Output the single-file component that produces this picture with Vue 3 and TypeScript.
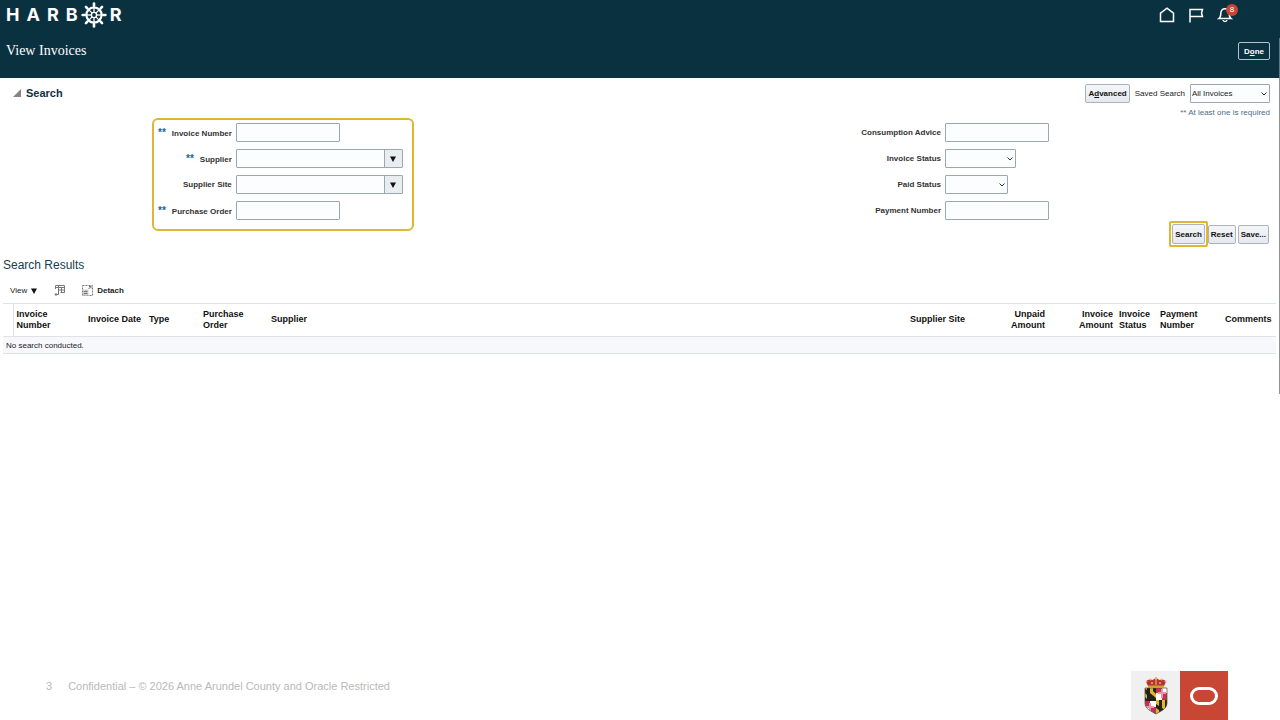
<script setup lang="ts">
import { ref } from 'vue'

interface Field {
  id: string
  label: string
  kind: 'text' | 'combo' | 'select'
  required?: boolean
  size?: string
}

interface Column {
  label: string[]
  width: string
  align?: 'right'
}

const mainFields: Field[] = [
  { id: 'invoice-number', label: 'Invoice Number', kind: 'text', required: true },
  { id: 'supplier', label: 'Supplier', kind: 'combo', required: true },
  { id: 'supplier-site', label: 'Supplier Site', kind: 'combo' },
  { id: 'purchase-order', label: 'Purchase Order', kind: 'text', required: true },
]

const extraFields: Field[] = [
  { id: 'consumption-advice', label: 'Consumption Advice', kind: 'text' },
  { id: 'invoice-status', label: 'Invoice Status', kind: 'select', size: 'wide' },
  { id: 'paid-status', label: 'Paid Status', kind: 'select', size: 'narrow' },
  { id: 'payment-number', label: 'Payment Number', kind: 'text' },
]

const columns: Column[] = [
  { label: ['Invoice', 'Number'], width: 'w72' },
  { label: ['Invoice Date'], width: 'w61' },
  { label: ['Type'], width: 'w54' },
  { label: ['Purchase', 'Order'], width: 'w68' },
  { label: ['Supplier'], width: 'fluid' },
  { label: ['Supplier Site'], width: 'w80' },
  { label: ['Unpaid', 'Amount'], width: 'w61', align: 'right' },
  { label: ['Invoice', 'Amount'], width: 'w68', align: 'right' },
  { label: ['Invoice', 'Status'], width: 'w41' },
  { label: ['Payment', 'Number'], width: 'w65' },
  { label: ['Comments'], width: 'w54' },
]

const spokes = [0, 45, 90, 135, 180, 225, 270, 315]
const savedSearch = ref('All Invoices')
const expanded = ref(true)
</script>

<template>
  <div class="page">
    <div class="screen">
      <header class="top">
        <div class="brand-row">
          <div class="brand">
            <span>H</span><span>A</span><span>R</span><span>B</span>
            <svg class="wheel" viewBox="0 0 26 26" role="img" aria-label="O">
              <g fill="none" stroke="#fff">
                <circle cx="13" cy="13" r="7.6" stroke-width="2.2" />
                <circle cx="13" cy="13" r="2.6" stroke-width="1.4" />
                <g v-for="a in spokes" :key="a" :transform="`rotate(${a} 13 13)`">
                  <path d="M13 10.4V2" stroke-width="1.3" />
                  <path d="M13 3.4V1.6" stroke-width="2.6" stroke-linecap="round" />
                </g>
              </g>
            </svg>
            <span>R</span>
          </div>
          <nav class="icons">
            <a href="#" aria-label="Home">
              <svg viewBox="0 0 16 16"><path d="M1.500 14.500V6.200L8 1.200l6.500 5v8.300z" /></svg>
            </a>
            <a href="#" aria-label="Watchlist">
              <svg viewBox="0 0 16 16"><path d="M2 15.500V2.500h12.500l-1 3.500 1 3.500H2" /></svg>
            </a>
            <a href="#" class="bell" aria-label="Notifications">
              <svg viewBox="0 0 16 16">
                <path d="M2 11.500c1.500-1 1.800-2 1.800-5C3.800 3.500 5.500 1.800 8 1.800s4.200 1.700 4.200 4.700c0 3 .3 4 1.800 5zM6 13c.3 2 3.700 2 4 0" />
              </svg>
              <span class="badge">8</span>
            </a>
          </nav>
        </div>
        <div class="title-row">
          <h1>View Invoices</h1>
          <button type="button" class="done">D<u>o</u>ne</button>
        </div>
      </header>

      <form class="search" @submit.prevent>
        <div class="search-head">
          <button type="button" class="disclose" :aria-expanded="expanded" @click="expanded = !expanded">
            <svg viewBox="0 0 8 8"><path d="M8 0v8H0z" /></svg>
            <span>Search</span>
          </button>
          <div class="saved">
            <button type="button" class="btn">A<u>d</u>vanced</button>
            <label for="saved-search">Saved Search</label>
            <span class="select all">
              <select id="saved-search" v-model="savedSearch">
                <option>All Invoices</option>
              </select>
              <svg viewBox="0 0 6 4"><path d="M.5.5 3 3 5.500.5" /></svg>
            </span>
          </div>
        </div>
        <p class="hint">** At least one is required</p>

        <div class="fields">
          <div class="group boxed">
            <template v-for="f in mainFields" :key="f.id">
              <label :for="f.id"><span v-if="f.required" class="star">**</span>{{ f.label }}</label>
              <input v-if="f.kind === 'text'" :id="f.id" type="text" class="text" />
              <span v-else class="combo">
                <input :id="f.id" type="text" />
                <button type="button" :aria-label="`Open ${f.label}`">
                  <svg viewBox="0 0 6 6"><path d="M0 .5h6l-3 5.500z" /></svg>
                </button>
              </span>
            </template>
          </div>
          <div class="group">
            <template v-for="f in extraFields" :key="f.id">
              <label :for="f.id">{{ f.label }}</label>
              <input v-if="f.kind === 'text'" :id="f.id" type="text" class="text" />
              <span v-else class="select" :class="f.size">
                <select :id="f.id"><option></option></select>
                <svg viewBox="0 0 6 4"><path d="M.5.5 3 3 5.500.5" /></svg>
              </span>
            </template>
          </div>
        </div>

        <div class="actions">
          <span class="highlight"><button type="submit" class="btn">Search</button></span>
          <button type="reset" class="btn">Reset</button>
          <button type="button" class="btn save">Save...</button>
        </div>
      </form>

      <section class="results">
        <h2>Search Results</h2>
        <div class="toolbar">
          <button type="button" class="tool">
            View <svg class="caret" viewBox="0 0 6 6"><path d="M0 .5h6l-3 5.500z" /></svg>
          </button>
          <button type="button" class="tool" aria-label="Query by example">
            <svg class="glyph" viewBox="0 0 11 11">
              <path d="M1.500.5h9v7h-4M1.500.5V4M1.500 2.500h9M4.500 1v4M7.500 2.500v5M4.500 5h6M4.500 5v4.500H1M2.500 8 1 9.500 2.500 11" />
            </svg>
          </button>
          <button type="button" class="tool strong">
            <svg class="glyph" viewBox="0 0 11 11">
              <path d="M.5.5h10v10H.5z" stroke-dasharray="2 1" />
              <path d="M1 4.500h5.500v6H1z" class="pane" />
              <path d="M2 6.500h3.500M2 8.500h3.500M6.500 4 9 1.500M7 1.500h2v2" />
            </svg>
            Detach
          </button>
        </div>
        <table>
          <colgroup>
            <col class="w10" />
            <col v-for="c in columns" :key="c.label.join()" :class="c.width" />
          </colgroup>
          <thead>
            <tr>
              <td class="corner"></td>
              <th v-for="c in columns" :key="c.label.join()" scope="col" :class="c.align">
                <template v-for="(line, i) in c.label" :key="line"><br v-if="i" />{{ line }}</template>
              </th>
            </tr>
          </thead>
          <tbody>
            <tr><td colspan="12">No search conducted.</td></tr>
          </tbody>
        </table>
      </section>
    </div>

    <footer>
      <p><span>3</span><span>Confidential – © 2026 Anne Arundel County and Oracle Restricted</span></p>
      <div class="logos">
        <div class="county">
          <svg viewBox="0 0 24 38" role="img" aria-label="County crest">
            <defs>
              <clipPath id="shield"><path d="M1 11h22v15c0 6-6 8-11 11C7 34 1 32 1 26z" /></clipPath>
            </defs>
            <path d="M4 9 2 5c1-3 5-3 7-2 1-2 5-2 6 0 2-1 6-1 7 2l-2 4z" fill="#b5323c" />
            <path d="M4 8.500h16v2H4zM11.300 0h1.400v8h-1.400z" fill="#d6a32f" />
            <g fill="#e3b75d">
              <circle cx="12" cy="1.500" r="1.300" /><circle cx="6.500" cy="2.500" r="1" />
              <circle cx="17.500" cy="2.500" r="1" /><circle cx="2.500" cy="4.500" r="1" /><circle cx="21.500" cy="4.500" r="1" />
              <circle cx="8" cy="6" r="1" /><circle cx="16" cy="6" r="1" />
            </g>
            <g clip-path="url(#shield)">
              <path d="M0 10h24v28H0z" fill="#e2b52f" />
              <path d="M3 10h3v6l6 5v-4l-3-3v-4h3v28H9v-6l-9-8v-5l3 3v-4l-3-3v-4l3 2zM15 23h3v15h-3zM21 23h3v12h-3zM12 27l12 8v4l-12-8z" fill="#24201d" />
              <path d="M12 10h12v13H12zM0 24h12v14H0z" fill="#fff" />
              <path d="M12 10h6v6h-6zM18 16h6v7h-6zM0 24h6v6H0zM6 30h6v8H6z" fill="#c33152" />
              <path d="M17 12h2v3h3v2h-3v4h-2v-4h-3v-2h3zM5 26h2v3h3v2H7v4H5v-4H2v-2h3z" fill="#e994a7" />
            </g>
            <path d="M1 11h22v15c0 6-6 8-11 11C7 34 1 32 1 26z" fill="none" stroke="#5d4a35" stroke-width=".7" />
          </svg>
        </div>
        <div class="oracle">
          <svg viewBox="0 0 28 18" role="img" aria-label="Oracle">
            <rect x="1.500" y="1.500" width="25" height="15" rx="7.500" />
          </svg>
        </div>
      </div>
    </footer>
  </div>
</template>

<style>
body {
  margin: 0;
  background: #fff;
}
</style>

<style scoped>
.page {
  display: flex;
  flex-direction: column;
  justify-content: space-between;
  min-height: 100vh;
  font: 8px/11px "Liberation Sans", Arial, sans-serif;
  color: #222;
}
.page * {
  box-sizing: border-box;
}
h1, h2, p {
  margin: 0;
  font-weight: normal;
}
button, input, select {
  font: inherit;
  color: inherit;
  margin: 0;
}
svg {
  display: block;
}
.screen {
  padding-bottom: 40px;
  border-right: 1px solid #8d9499;
}
.top {
  background: #0a3140;
  color: #fff;
  height: 78px;
  margin-right: -1px;
}
.brand-row, .title-row, .search-head {
  display: flex;
  align-items: center;
  justify-content: space-between;
}
.brand-row {
  height: 30px;
  padding: 0 47px 0 6px;
}
.brand {
  display: flex;
  align-items: center;
  gap: 7px;
  font: 700 18px/30px Inter, "Liberation Sans", sans-serif;
}
.wheel {
  width: 26px;
  height: 26px;
  margin: 0 -4px;
}
.icons {
  display: flex;
  gap: 13px;
}
.icons svg {
  width: 16px;
  height: 16px;
  fill: none;
  stroke: #fff;
  stroke-width: 1.5;
}
.bell {
  position: relative;
}
.badge {
  position: absolute;
  top: -3px;
  right: -5px;
  width: 12px;
  height: 12px;
  border-radius: 50%;
  background: #c74634;
  color: #fff;
  font-size: 8px;
  line-height: 12px;
  text-align: center;
}
.title-row {
  align-items: flex-start;
  height: 40px;
  margin-top: 8px;
  padding: 4px 9px 0 6px;
  border-right: 1px solid #5f7a86;
}
h1 {
  font: 14px/18px "Liberation Serif", Georgia, serif;
}
.done {
  height: 18px;
  padding: 0 5px;
  border: 1px solid #b5c4ca;
  border-radius: 2px;
  background: none;
  font-weight: bold;
}
.search-head {
  height: 30px;
  padding: 0 9px 0 13px;
}
.disclose {
  display: flex;
  align-items: center;
  gap: 5px;
  padding: 0;
  border: 0;
  background: none;
  font: bold 11px/14px "Liberation Sans", Arial, sans-serif;
  color: #12303c;
}
.disclose svg {
  width: 8px;
  height: 8px;
  fill: #858585;
}
.saved {
  display: flex;
  align-items: center;
  gap: 5px;
}
.btn {
  height: 19px;
  padding: 0 2px;
  border: 1px solid #a9b4bd;
  border-radius: 2px;
  background: linear-gradient(#f4f6f9, #e5e8ed);
  font-weight: bold;
  color: #111;
}
.hint {
  padding-right: 9px;
  line-height: 10px;
  text-align: right;
  color: #4c6d84;
}
.fields {
  display: flex;
  justify-content: space-between;
  padding: 0 230px 0 152px;
}
.group {
  display: grid;
  grid-template-columns: auto auto;
  grid-auto-rows: 19px;
  row-gap: 7px;
  column-gap: 4px;
  align-items: center;
  align-content: start;
  padding-top: 5px;
}
.group label {
  text-align: right;
  font-weight: bold;
  color: #333;
}
.boxed {
  padding: 3px 9px 9px 4px;
  border: 2px solid #dfb62f;
  border-radius: 6px;
}
.star {
  margin-right: 6px;
  font-size: 10px;
  color: #1763a6;
}
.text, .combo, .select select {
  height: 19px;
  border: 1px solid #9aa8b3;
  border-radius: 1px;
  background: #fcfdff;
}
.text {
  width: 104px;
  padding: 0 3px;
}
.combo {
  display: flex;
  width: 167px;
}
.combo input {
  flex: 1;
  min-width: 0;
  padding: 0 3px;
  border: 0;
  background: none;
}
.combo button {
  display: grid;
  place-items: center;
  width: 18px;
  padding: 0;
  border: 0;
  border-left: 1px solid #9aa8b3;
  background: #e9edf2;
}
.combo svg, .caret {
  width: 6px;
  height: 6px;
  fill: #111;
}
.select {
  position: relative;
}
.select select {
  display: block;
  width: 100%;
  padding: 0 14px 0 1px;
  appearance: none;
}
.select svg {
  position: absolute;
  top: 8px;
  right: 3px;
  width: 6px;
  height: 4px;
  fill: none;
  stroke: #333;
  pointer-events: none;
}
.all {
  width: 80px;
}
.wide {
  width: 71px;
}
.narrow {
  width: 63px;
}
.actions {
  display: flex;
  justify-content: flex-end;
  align-items: center;
  height: 26px;
  margin-top: -10px;
  padding-right: 10px;
}
.highlight {
  display: flex;
  padding: 1px;
  border: 2px solid #dfb62f;
  border-radius: 2px;
}
.highlight .btn {
  height: 20px;
}
.save {
  margin-left: 2px;
}
h2 {
  padding: 10px 0 0 3px;
  font-size: 12px;
  line-height: 16px;
  color: #16404f;
}
.toolbar {
  display: flex;
  align-items: center;
  gap: 17px;
  height: 30px;
  padding: 5px 0 0 10px;
}
.tool {
  display: flex;
  align-items: center;
  gap: 4px;
  padding: 0;
  border: 0;
  background: none;
}
.strong {
  font-weight: bold;
}
.glyph {
  width: 11px;
  height: 11px;
  fill: none;
  stroke: #777;
}
.pane {
  fill: #ccc;
  stroke: none;
}
.results table {
  width: calc(100% - 6px);
  margin-left: 3px;
  table-layout: fixed;
  border-collapse: collapse;
}
th, td {
  padding: 0 3px;
  text-align: left;
}
th {
  padding-bottom: 1px;
  font-size: 9px;
  color: #111;
  white-space: nowrap;
}
thead tr {
  height: 33px;
  border-top: 1px solid #dfe3e7;
}
.corner {
  border-right: 1px solid #dfe3e7;
}
.right {
  text-align: right;
}
tbody tr {
  height: 17px;
  background: #f7f8fc;
  border-top: 1px solid #dfe3e7;
  border-bottom: 1px solid #dfe3e7;
}
.w10 { width: 10px; }
.w41 { width: 41px; }
.w54 { width: 54px; }
.w61 { width: 61px; }
.w65 { width: 65px; }
.w68 { width: 68px; }
.w72 { width: 72px; }
.w80 { width: 80px; }
footer {
  display: flex;
  justify-content: space-between;
  padding: 0 52px 0 46px;
}
footer p {
  display: flex;
  gap: 16px;
  padding-top: 9px;
  font-size: 11px;
  line-height: 13px;
  color: #b9b9b9;
}
.logos {
  display: flex;
}
.logos div {
  display: grid;
  place-items: center;
  width: 48px;
  height: 49px;
}
.logos .county {
  width: 49px;
  background: #f0f0f0;
}
.county svg {
  width: 24px;
  height: 38px;
}
.logos .oracle {
  background: #c74634;
}
.oracle svg {
  width: 28px;
  height: 18px;
  fill: none;
  stroke: #fff;
  stroke-width: 3;
}
</style>
